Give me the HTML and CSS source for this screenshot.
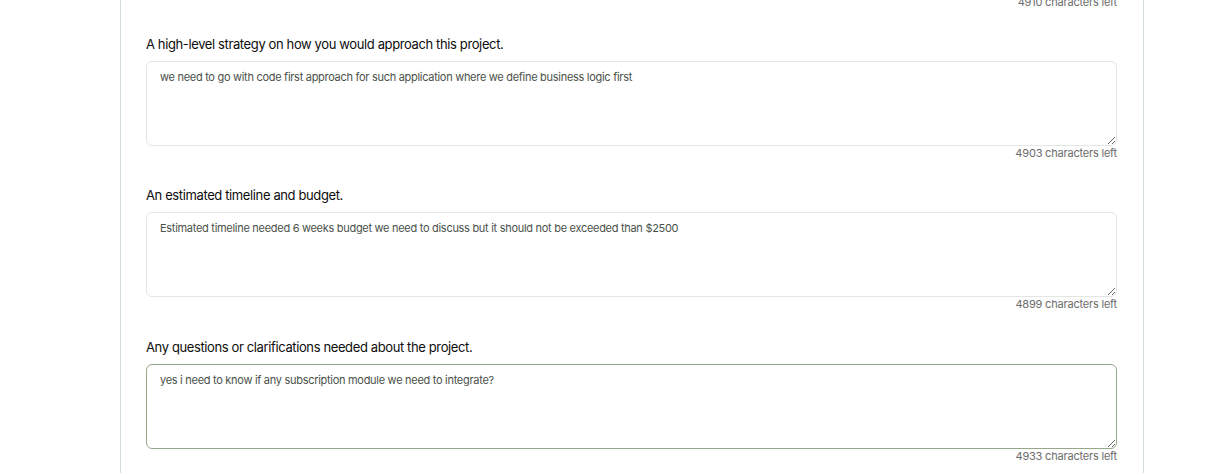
FILE: index.html
```html
<!DOCTYPE html>
<html lang="en">
<head>
<meta charset="utf-8">
<title>Proposal</title>
<link rel="stylesheet" href="styles.css">
</head>
<body>
<div class="card">
  <div class="counter first">4910 characters left</div>

  <div class="field">
    <label class="label" for="q1">A high-level strategy on how you would approach this project.</label>
    <textarea id="q1" class="input" spellcheck="false">we need to go with code first approach for such application where we define business logic first</textarea>
    <div class="counter">4903 characters left</div>
  </div>

  <div class="field">
    <label class="label" for="q2">An estimated timeline and budget.</label>
    <textarea id="q2" class="input" spellcheck="false">Estimated timeline needed 6 weeks budget we need to discuss but it should not be exceeded than $2500</textarea>
    <div class="counter">4899 characters left</div>
  </div>

  <div class="field">
    <label class="label" for="q3">Any questions or clarifications needed about the project.</label>
    <textarea id="q3" class="input focused" spellcheck="false">yes i need to know if any subscription module we need to integrate?</textarea>
    <div class="counter">4933 characters left</div>
  </div>
</div>
</body>
</html>
```

FILE: styles.css
```css
html, body {
  margin: 0;
  padding: 0;
  background: #ffffff;
  overflow: hidden;
}

body {
  font-family: Inter, "Noto Sans", "Liberation Sans", sans-serif;
  color: #0d0d0d;
}

.card {
  box-sizing: border-box;
  margin-left: 120px;
  width: 1024px;
  height: 600px;
  padding: 0 26px 0 25px;
  border-left: 1px solid #d5e0d5;
  border-right: 1px solid #d5e0d5;
}

.counter {
  font-size: 11px;
  line-height: 14px;
  color: #6b6b6b;
  text-align: right;
  letter-spacing: -0.2px;
}

.counter.first {
  margin-top: -5px;
  margin-bottom: 25.75px;
}

.field {
  display: flex;
  flex-direction: column;
  margin-bottom: 26.5px;
}

.label {
  display: block;
  font-size: 13px;
  line-height: 18px;
  color: #0d0d0d;
  margin-bottom: 8px;
  letter-spacing: -0.38px;
}

.input {
  display: block;
  box-sizing: border-box;
  width: 100%;
  height: 85px;
  margin: 0;
  padding: 7px 13px;
  border: 1px solid #e4e6e4;
  border-radius: 6px;
  font-family: Inter, "Noto Sans", "Liberation Sans", sans-serif;
  font-size: 11px;
  line-height: 16px;
  letter-spacing: -0.29px;
  color: #4a514a;
  background: #ffffff;
  resize: vertical;
  outline: none;
}

.input.focused {
  border-color: #95a88a;
}
```
